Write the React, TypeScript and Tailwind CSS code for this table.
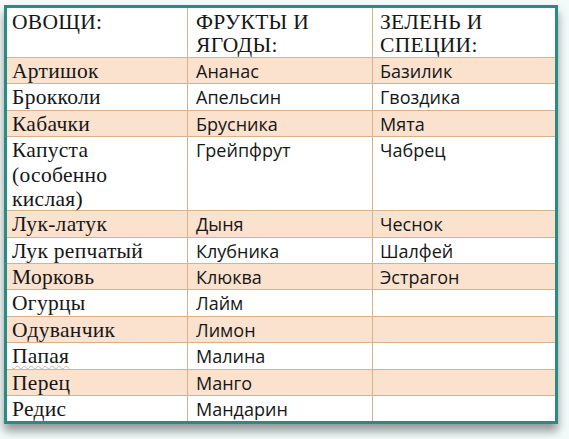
import React from 'react';

const rows: [string, string, string][] = [
  ['Артишок', 'Ананас', 'Базилик'],
  ['Брокколи', 'Апельсин', 'Гвоздика'],
  ['Кабачки', 'Брусника', 'Мята'],
  ['Капуста (особенно кислая)', 'Грейпфрут', 'Чабрец'],
  ['Лук-латук', 'Дыня', 'Чеснок'],
  ['Лук репчатый', 'Клубника', 'Шалфей'],
  ['Морковь', 'Клюква', 'Эстрагон'],
  ['Огурцы', 'Лайм', ''],
  ['Одуванчик', 'Лимон', ''],
  ['Папая', 'Малина', ''],
  ['Перец', 'Манго', ''],
  ['Редис', 'Мандарин', ''],
];

const serif = "font-['Liberation_Serif',serif] text-[21.5px] tracking-[0.3px]";
const sans = "font-['Open_Sans',sans-serif] text-[18px]";

export default function App() {
  return (
    <div className="w-[569px] h-[439px] bg-[#f3fafa] pt-[5px] pl-[4px]">
      <div className="w-[554px] border-[3px] border-[#2b8a82] bg-white shadow-[0_7px_9px_rgba(0,0,0,0.4)] text-[#161616]">
        <div className="grid grid-cols-[181px_185px_1fr] h-[49px] leading-[23px]">
          <div className={`${serif} pl-[5px] pt-[3px] border-r border-[#d9b08c]`}>ОВОЩИ:</div>
          <div className={`${serif} pl-[8px] pt-[3px] border-r border-[#d9b08c]`}>ФРУКТЫ И<br />ЯГОДЫ:</div>
          <div className={`${serif} pl-[7px] pt-[3px]`}>ЗЕЛЕНЬ И<br />СПЕЦИИ:</div>
        </div>
        {rows.map((r, i) => (
          <div
            key={i}
            className={`grid grid-cols-[181px_185px_1fr] border-t border-[#d9b08c] leading-[24.5px] ${i % 2 === 0 ? 'bg-[#fbe2cf]' : 'bg-white'} ${i === 3 ? 'h-[74px]' : 'h-[26.4px]'}`}
          >
            <div className={`${serif} pl-[5px] pt-[1px] border-r border-[#d9b08c]`}>
              {i === 3 ? (
                <>Капуста<br />(особенно<br />кислая)</>
              ) : i === 9 ? (
                <span className="underline decoration-wavy decoration-[#c9b9a0] decoration-1 underline-offset-2">{r[0]}</span>
              ) : (
                r[0]
              )}
            </div>
            <div className={`${sans} pl-[8px] pt-[1px] border-r border-[#d9b08c]`}>{r[1]}</div>
            <div className={`${sans} pl-[7px] pt-[1px]`}>{r[2]}</div>
          </div>
        ))}
      </div>
    </div>
  );
}
